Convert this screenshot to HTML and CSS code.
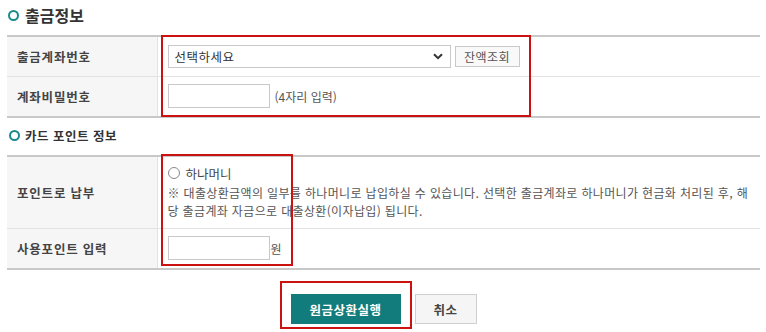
FILE: index.html
```html
<!DOCTYPE html>
<html lang="ko">
<head>
  <meta charset="UTF-8" />
  <title>원금상환</title>
  <link rel="stylesheet" href="styles.css">
</head>
<body>
  <div class="page">

    <h2 class="sec-title big">출금정보</h2>
    <table class="form-table">
      <tr class="row-h40">
        <th>출금계좌번호</th>
        <td>
          <div class="inline">
            <div class="select-box">
              <span>선택하세요</span>
              <svg class="chev" width="10" height="7" viewBox="0 0 10 7"><path d="M1 1.2 L5 5.2 L9 1.2" fill="none" stroke="#333" stroke-width="2"/></svg>
            </div>
            <button class="small-btn">잔액조회</button>
          </div>
        </td>
      </tr>
      <tr class="row-h41">
        <th>계좌비밀번호</th>
        <td>
          <div class="inline">
            <input type="password" class="text-input">
            <span class="hint">(4자리 입력)</span>
          </div>
        </td>
      </tr>
    </table>

    <h2 class="sec-title">카드 포인트 정보</h2>
    <table class="form-table">
      <tr class="row-h73">
        <th>포인트로 납부</th>
        <td class="top">
          <label class="radio"><span class="radio-dot"></span>하나머니</label>
          <p class="notice">※ 대출상환금액의 일부를 하나머니로 납입하실 수 있습니다. 선택한 출금계좌로 하나머니가 현금화 처리된 후, 해당 출금계좌 자금으로 대출상환(이자납입) 됩니다.</p>
        </td>
      </tr>
      <tr class="row-h42">
        <th>사용포인트 입력</th>
        <td>
          <div class="inline">
            <input type="text" class="text-input">
            <span class="unit">원</span>
          </div>
        </td>
      </tr>
    </table>

    <div class="btn-area">
      <button class="btn-main">원금상환실행</button>
      <button class="btn-sub">취소</button>
    </div>

    <!-- red annotation boxes -->
    <div class="mark mark-1"></div>
    <div class="mark mark-2"></div>
    <div class="mark mark-3"></div>
  </div>
</body>
</html>
```

FILE: styles.css
```css
* {
  box-sizing: border-box;
}

body {
  margin: 0;
  background: #fff;
  font-family: "Noto Sans CJK KR", "Noto Sans", sans-serif;
  color: #555;
}

.page {
  position: relative;
  width: 766px;
  height: 332px;
  padding: 0 6px 0 7px;
}

.sec-title {
  margin: 0;
  font-size: 12.5px;
  font-weight: bold;
  color: #333;
  display: flex;
  align-items: center;
  height: 37px;
  padding: 0 0 2px 2px;
  letter-spacing: 0.5px;
}

.sec-title::before {
  content: "";
  width: 7px;
  height: 7px;
  border: 2px solid #1a8a8a;
  border-radius: 50%;
  margin-right: 5px;
}

.sec-title.big {
  font-size: 16px;
  font-weight: bold;
  height: 35px;
  padding: 0 0 5px 1px;
  letter-spacing: 0;
}

.sec-title.big::before {
  margin-right: 6px;
}

.form-table {
  width: 100%;
  border-collapse: collapse;
  border-top: 2px solid #c8c8c8;
  border-bottom: 2px solid #c8c8c8;
}

.form-table th {
  width: 150px;
  background: #f6f6f6;
  text-align: left;
  padding: 0 0 0 10px;
  font-size: 12.5px;
  font-weight: bold;
  color: #444;
  border-right: 1px solid #e2e2e2;
  letter-spacing: 0.8px;
}

.form-table td {
  padding: 0 10px;
  font-size: 12px;
}

.form-table tr + tr th,
.form-table tr + tr td {
  border-top: 1px solid #e2e2e2;
}

.form-table td.top {
  vertical-align: top;
  padding-top: 9px;
}

.row-h40 { height: 40px; }
.row-h41 { height: 41px; }
.row-h73 { height: 72px; }
.row-h42 { height: 41px; }

.inline {
  display: flex;
  align-items: center;
  gap: 4px;
}

.select-box {
  width: 283px;
  height: 23px;
  border: 1px solid #c9c9c9;
  display: flex;
  align-items: center;
  justify-content: space-between;
  padding: 0 7px 0 6px;
  font-size: 12.5px;
  color: #333;
  letter-spacing: 0.5px;
}

.chev {
  display: block;
}

.small-btn {
  height: 21px;
  width: 65px;
  border: 1px solid #c9c9c9;
  background: #f9f9f9;
  font-family: inherit;
  font-size: 12px;
  color: #555;
  padding: 0;
  letter-spacing: 0.5px;
}

.text-input {
  width: 102px;
  height: 24px;
  border: 1px solid #c9c9c9;
  margin: 0;
}

.hint {
  margin-left: 1px;
  color: #555;
}

.unit {
  margin-left: -3px;
  color: #555;
}

.radio {
  display: flex;
  align-items: center;
  gap: 6px;
  color: #444;
  font-size: 12.5px;
  height: 14px;
}

.radio-dot {
  width: 12px;
  height: 12px;
  border: 1px solid #888;
  border-radius: 50%;
}

.notice {
  margin: 4px 0 0;
  line-height: 18px;
  word-break: break-all;
  color: #555;
  letter-spacing: 0.35px;
}

.btn-area {
  display: flex;
  justify-content: center;
  gap: 14px;
  padding-top: 24px;
}

.btn-main,
.btn-sub {
  height: 30px;
  font-family: inherit;
  font-size: 12.5px;
  font-weight: bold;
  padding: 0;
  letter-spacing: 0.5px;
}

.btn-main {
  width: 110px;
  background: #127b7b;
  color: #fff;
  border: none;
}

.btn-sub {
  width: 62px;
  background: #f5f5f5;
  color: #444;
  border: 1px solid #cfcfcf;
}

.mark {
  position: absolute;
  border: 2px solid #cc1111;
}

.mark-1 { left: 161px; top: 35px; width: 370px; height: 82px; }
.mark-2 { left: 161px; top: 154px; width: 132px; height: 112px; }
.mark-3 { left: 280px; top: 281px; width: 132px; height: 48px; }
```
